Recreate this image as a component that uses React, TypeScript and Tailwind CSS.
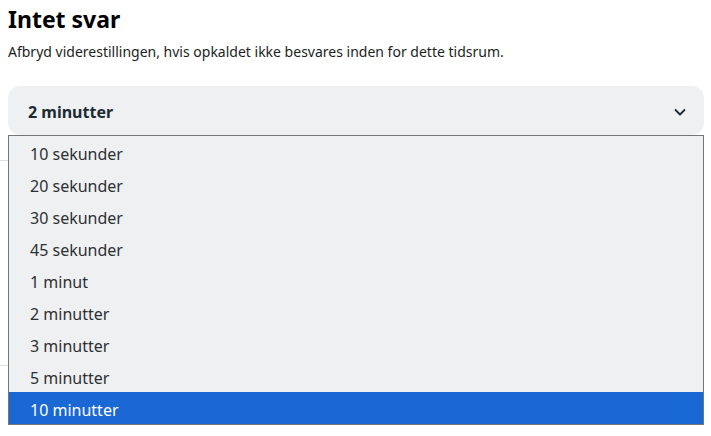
import React from 'react';

const options = [
  '10 sekunder',
  '20 sekunder',
  '30 sekunder',
  '45 sekunder',
  '1 minut',
  '2 minutter',
  '3 minutter',
  '5 minutter',
  '10 minutter',
];

const App: React.FC = () => {
  const highlighted = options.length - 1;

  return (
    <div className="relative w-[711px] h-[436px] bg-white overflow-hidden font-['Noto_Sans',sans-serif] text-[#1c1e21]">
      <div className="px-2 pt-[3px]">
        <h1 className="text-[23px] font-bold leading-[32px] text-black">Intet svar</h1>
        <p className="mt-[8px] text-[14px] leading-[18px] text-[#1c1e21]">
          Afbryd viderestillingen, hvis opkaldet ikke besvares inden for dette tidsrum.
        </p>

        {/* Select */}
        <div className="mt-[25px] h-[49px] w-[696px] rounded-[12px] bg-[#eff0f2] flex items-center justify-between pl-[20px] pr-[17px] pt-[2px]">
          <span className="text-[16px] font-bold text-[#1c2b33]">2 minutter</span>
          <svg width="14" height="14" viewBox="0 0 14 14" fill="none">
            <path d="M2.5 5L7 9.5L11.5 5" stroke="#1c2b33" strokeWidth="1.8" strokeLinecap="round" strokeLinejoin="round" />
          </svg>
        </div>
      </div>

      {/* underlying page dividers, mostly hidden behind the open list */}
      <div className="flex flex-col">
        <div className="mt-[25px] h-px w-[20px] bg-[#dadde1]" />
        <div className="mt-[204px] h-px w-[20px] bg-[#dadde1]" />
      </div>

      {/* Open dropdown list */}
      <div className="absolute left-[8px] top-[135px] w-[696px] border border-[#767676] bg-[#eff0f2]">
        {options.map((opt, i) => (
          <div
            key={opt}
            className={
              i === highlighted
                ? 'h-[32px] flex items-center pl-[21px] pt-[4px] text-[16px] bg-[#1a68d4] text-white'
                : 'h-[32px] flex items-center pl-[21px] pt-[4px] text-[16px] text-[#2d2f33]'
            }
          >
            {opt}
          </div>
        ))}
      </div>
    </div>
  );
};

export default App;
